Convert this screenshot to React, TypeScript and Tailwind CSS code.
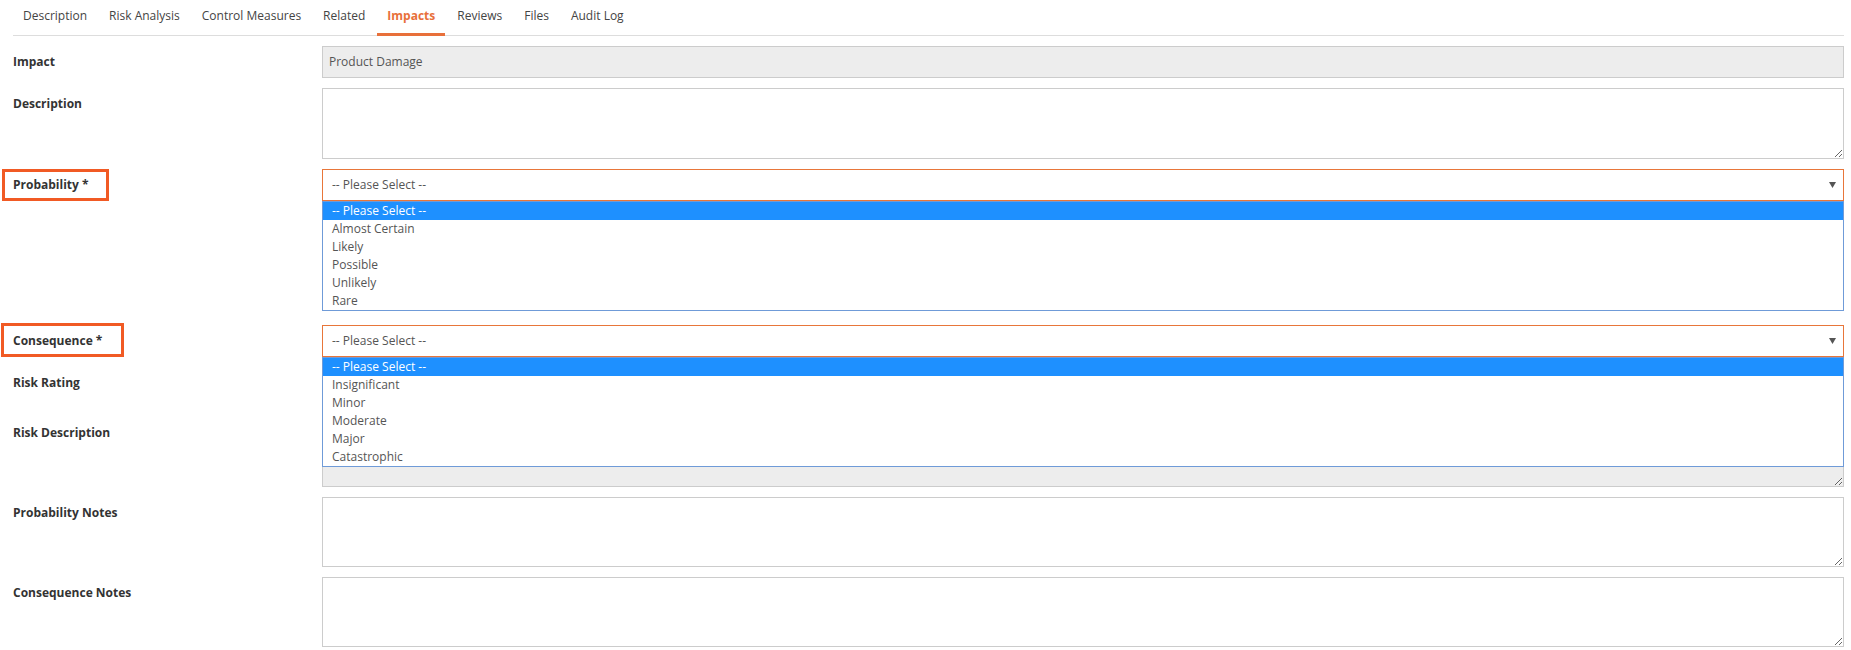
import { ReactNode } from "react";

// Risk register — Impacts tab, with both rating selects opened.
const tabs = ["Description", "Risk Analysis", "Control Measures", "Related", "Impacts", "Reviews", "Files", "Audit Log"];
const probabilityOptions = ["-- Please Select --", "Almost Certain", "Likely", "Possible", "Unlikely", "Rare"];
const consequenceOptions = ["-- Please Select --", "Insignificant", "Minor", "Moderate", "Major", "Catastrophic"];

function Caret() {
  return (
    <svg width="7" height="6" viewBox="0 0 7 6" className="shrink-0">
      <path d="M0 0h7L3.5 6z" fill="#555" />
    </svg>
  );
}

function Label({ children, box }: { children: ReactNode; box?: string }) {
  return (
    <div className="relative pt-[8px] text-[12px] leading-[16px] font-bold text-[#333]">
      {box && <span className={`pointer-events-none absolute border-[3px] border-[#f15a24] ${box}`} />}
      <span className="relative">{children}</span>
    </div>
  );
}

function SelectBox() {
  return (
    <div className="flex h-[32px] items-center justify-between border border-[#e8763a] bg-white pl-[9px] pr-[7px] text-[12px] text-[#555]">
      <span>-- Please Select --</span>
      <Caret />
    </div>
  );
}

function OptionList({ options }: { options: string[] }) {
  return (
    <div className="border border-[#6f9bd8] bg-white text-[12px] leading-[18px] text-[#555]">
      {options.map((o, i) => (
        <div key={o} className={i === 0 ? "bg-[#1e90ff] pl-[9px] text-white" : "pl-[9px]"}>
          {o}
        </div>
      ))}
    </div>
  );
}

function Area({ grey }: { grey?: boolean }) {
  return (
    <textarea
      readOnly={grey}
      className={`block h-[70px] w-full border border-[#ccc] outline-none ${grey ? "bg-[#ededed]" : "bg-white"}`}
    />
  );
}

export default function App() {
  return (
    <div className="min-h-[650px] bg-white pl-[13px] pr-[7px]" style={{ fontFamily: '"Open Sans", "Liberation Sans", sans-serif' }}>
      <div className="flex gap-[2px] border-b border-[#ddd]">
        {tabs.map((t) =>
          t === "Impacts" ? (
            <div key={t} className="-mb-px h-[36px] border-b-[3px] border-[#e8703a] px-[10px] pt-[8px] text-[12px] leading-[16px] font-bold text-[#e8703a]">
              {t}
            </div>
          ) : (
            <div key={t} className="-mb-px h-[36px] border-b-[3px] border-transparent px-[10px] pt-[8px] text-[12px] leading-[16px] text-[#444]">
              {t}
            </div>
          )
        )}
      </div>

      <div className="mt-[10px] grid grid-cols-[309px_1fr] gap-y-[10px]">
        <Label>Impact</Label>
        <div className="flex h-[32px] items-center border border-[#ccc] bg-[#ededed] pl-[6px] text-[12px] text-[#555]">
          Product Damage
        </div>

        <Label>Description</Label>
        <textarea className="block h-[71px] w-full border border-[#ccc] bg-white outline-none" />

        <Label box="-left-[11px] top-0 h-[32px] w-[107px]">Probability *</Label>
        <div className="pb-[4px]">
          <SelectBox />
          <OptionList options={probabilityOptions} />
        </div>

        <Label box="-left-[12px] -top-[2px] h-[34px] w-[123px]">Consequence *</Label>
        <div className="relative">
          <SelectBox />
          <div className="absolute left-0 right-0 top-full z-10">
            <OptionList options={consequenceOptions} />
          </div>
        </div>

        <Label>Risk Rating</Label>
        <div className="h-[40px] border border-[#ccc] bg-[#ededed]" />

        <Label>Risk Description</Label>
        <Area grey />

        <Label>Probability Notes</Label>
        <Area />

        <Label>Consequence Notes</Label>
        <Area />
      </div>
    </div>
  );
}
